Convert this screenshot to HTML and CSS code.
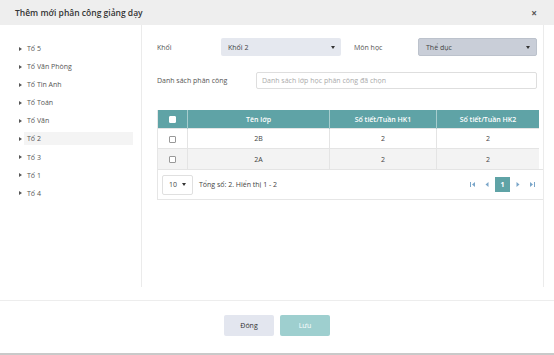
FILE: index.html
```html
<!DOCTYPE html>
<html lang="vi">
<head>
    <meta charset="UTF-8">
    <title>Thêm mới phân công giảng dạy</title>
    <link rel="stylesheet" href="styles.css">
</head>
<body>
<div class="modal">
    <div class="modal-header">
        <span class="modal-title">Thêm mới phân công giảng dạy</span>
        <span class="modal-close">×</span>
    </div>

    <div class="modal-body">
        <ul class="tree">
            <li><span class="caret"></span>Tố 5</li>
            <li><span class="caret"></span>Tố Văn Phòng</li>
            <li><span class="caret"></span>Tố Tin Anh</li>
            <li><span class="caret"></span>Tố Toán</li>
            <li><span class="caret"></span>Tố Văn</li>
            <li class="selected"><span class="caret"></span>Tố 2</li>
            <li><span class="caret"></span>Tố 3</li>
            <li><span class="caret"></span>Tố 1</li>
            <li><span class="caret"></span>Tố 4</li>
        </ul>

        <div class="content">
            <div class="form-row">
                <label class="label label-khoi">Khối</label>
                <div class="select">Khối 2<span class="arrow"></span></div>
                <label class="label label-mon">Môn học</label>
                <div class="select select-dark">Thể dục<span class="arrow"></span></div>
            </div>

            <div class="form-row row-list">
                <label class="label label-list">Danh sách phân công</label>
                <div class="input">Danh sách lớp học phân công đã chọn</div>
            </div>

            <div class="grid">
                <table>
                    <thead>
                    <tr>
                        <th class="col-check"><span class="check check-head"></span></th>
                        <th class="col-name">Tên lớp</th>
                        <th class="col-hk">Số tiết/Tuần HK1</th>
                        <th>Số tiết/Tuần HK2</th>
                    </tr>
                    </thead>
                    <tbody>
                    <tr>
                        <td><span class="check"></span></td>
                        <td>2B</td>
                        <td>2</td>
                        <td>2</td>
                    </tr>
                    <tr class="alt">
                        <td><span class="check"></span></td>
                        <td>2A</td>
                        <td>2</td>
                        <td>2</td>
                    </tr>
                    </tbody>
                </table>
                <div class="grid-footer">
                    <div class="page-size">10<span class="arrow"></span></div>
                    <span class="total">Tổng số: 2. Hiển thị 1 - 2</span>
                    <div class="pager">
                        <span class="page-btn">
                            <svg width="6" height="5" viewBox="0 0 6 5"><rect x="0" y="0" width="1" height="5" fill="#7aa6c9"/><path d="M5 0 L2 2.5 L5 5 Z" fill="#7aa6c9"/></svg>
                        </span>
                        <span class="page-btn">
                            <svg width="4" height="5" viewBox="0 0 4 5"><path d="M3.5 0 L0.5 2.5 L3.5 5 Z" fill="#7aa6c9"/></svg>
                        </span>
                        <span class="page-btn active">1</span>
                        <span class="page-btn">
                            <svg width="4" height="5" viewBox="0 0 4 5"><path d="M0.5 0 L3.5 2.5 L0.5 5 Z" fill="#7aa6c9"/></svg>
                        </span>
                        <span class="page-btn">
                            <svg width="6" height="5" viewBox="0 0 6 5"><path d="M1 0 L4 2.5 L1 5 Z" fill="#7aa6c9"/><rect x="5" y="0" width="1" height="5" fill="#7aa6c9"/></svg>
                        </span>
                    </div>
                </div>
            </div>
        </div>
    </div>

    <div class="modal-footer">
        <button class="btn btn-close">Đóng</button>
        <button class="btn btn-save">Lưu</button>
    </div>
</div>
</body>
</html>
```

FILE: styles.css
```css
body {
    margin: 0;
    font-family: "Open Sans", "Noto Sans", sans-serif;
    font-size: 7px;
    color: #444;
    background-color: #fff;
}
.modal {
    width: 554px;
    height: 353px;
    border-bottom: 2px solid #c9c9c9;
    display: flex;
    flex-direction: column;
}
.modal-header {
    height: 25px;
    background-color: #eeeeee;
    display: flex;
    align-items: center;
    justify-content: space-between;
    padding: 0 17px 0 15px;
}
.modal-title {
    font-size: 8.5px;
    font-weight: 600;
    color: #333;
}
.modal-close {
    font-size: 10px;
    font-weight: 700;
    color: #555;
}
.modal-body {
    display: flex;
    height: 262px;
    margin-bottom: 13px;
}
.tree {
    list-style: none;
    margin: 0;
    padding: 17px 0 0 0;
    width: 141px;
    border-right: 1px solid #ebebeb;
}
.tree li {
    height: 13px;
    line-height: 13px;
    margin-bottom: 5.1px;
    padding-left: 19px;
    display: flex;
    align-items: center;
    color: #555;
}
.tree li.selected {
    background: linear-gradient(to right, #fff 24px, #f4f4f4 24px, #f4f4f4 133px, #fff 133px);
}
.caret {
    width: 0;
    height: 0;
    border-top: 2px solid transparent;
    border-bottom: 2px solid transparent;
    border-left: 3px solid #555;
    margin-right: 5px;
}
.content {
    width: 386px;
    padding: 13px 0 0 15px;
    border-right: 1px solid #ebebeb;
}
.form-row {
    display: flex;
    align-items: center;
    height: 18px;
}
.row-list {
    margin-top: 16px;
    height: 17px;
}
.label {
    color: #555;
}
.label-khoi {
    width: 64px;
}
.label-mon {
    width: 64px;
    margin-left: 13px;
}
.label-list {
    width: 99px;
}
.select {
    width: 120px;
    height: 18px;
    box-sizing: border-box;
    background-color: #e5e8ef;
    border-radius: 2px;
    padding: 0 6px 0 7px;
    display: flex;
    align-items: center;
    justify-content: space-between;
    color: #444;
}
.select-dark {
    width: 119px;
    background-color: #c9ced8;
    border: 1px solid #bcc2cc;
}
.arrow {
    width: 0;
    height: 0;
    border-left: 2px solid transparent;
    border-right: 2px solid transparent;
    border-top: 3px solid #333;
}
.input {
    width: 281px;
    height: 17px;
    box-sizing: border-box;
    border: 1px solid #dedede;
    border-radius: 2px;
    padding-left: 5px;
    display: flex;
    align-items: center;
    color: #aaa;
}
.grid {
    margin-top: 21px;
    border-left: 1px solid #e6e6e6;
    border-bottom: 1px solid #e6e6e6;
}
table {
    width: 381px;
    border-collapse: collapse;
    table-layout: fixed;
}
th {
    background-color: #5fa3a6;
    color: #fff;
    font-weight: 600;
    height: 18px;
    padding: 0;
    border-right: 1px solid #a7cdce;
    text-align: center;
}
th:last-child {
    border-right: none;
}
.col-check {
    width: 29px;
}
.col-name {
    width: 141px;
}
.col-hk {
    width: 106px;
}
td {
    height: 19px;
    padding: 0;
    text-align: center;
    border-right: 1px solid #e4e4e4;
    border-top: 1px solid #e4e4e4;
    color: #444;
}
td:last-child {
    border-right: none;
}
tr.alt td {
    background-color: #f3f3f3;
    height: 20px;
}
.check {
    display: inline-block;
    width: 5px;
    height: 5px;
    border: 1px solid #999;
    border-radius: 1px;
    background-color: #fff;
    vertical-align: middle;
}
.check-head {
    border-color: #fff;
}
.grid-footer {
    display: flex;
    align-items: center;
    height: 29px;
    padding: 0 5px 0 4px;
    border-top: 1px solid #e4e4e4;
}
.page-size {
    width: 31px;
    height: 20px;
    box-sizing: border-box;
    border: 1px solid #e0e0e0;
    border-radius: 2px;
    display: flex;
    align-items: center;
    justify-content: space-between;
    padding: 0 6px 0 6px;
    margin-right: 6px;
}
.total {
    color: #444;
}
.pager {
    margin-left: auto;
    display: flex;
    gap: 2px;
}
.page-btn {
    width: 12px;
    height: 15px;
    display: flex;
    align-items: center;
    justify-content: center;
    background-color: #fff;
}
.page-btn.active {
    width: 15px;
    background-color: #5fa3a6;
    color: #fff;
    font-weight: 700;
}
.modal-footer {
    flex: 1;
    display: flex;
    justify-content: center;
    gap: 6px;
    padding-top: 14px;
    border-top: 1px solid #ededed;
}
.btn {
    width: 50px;
    height: 21px;
    border: none;
    border-radius: 2px;
    font-family: "Open Sans", "Noto Sans", sans-serif;
    font-size: 7px;
}
.btn-close {
    background-color: #e3e6ef;
    color: #333;
}
.btn-save {
    background-color: #9ecfcf;
    color: #fff;
}
```
